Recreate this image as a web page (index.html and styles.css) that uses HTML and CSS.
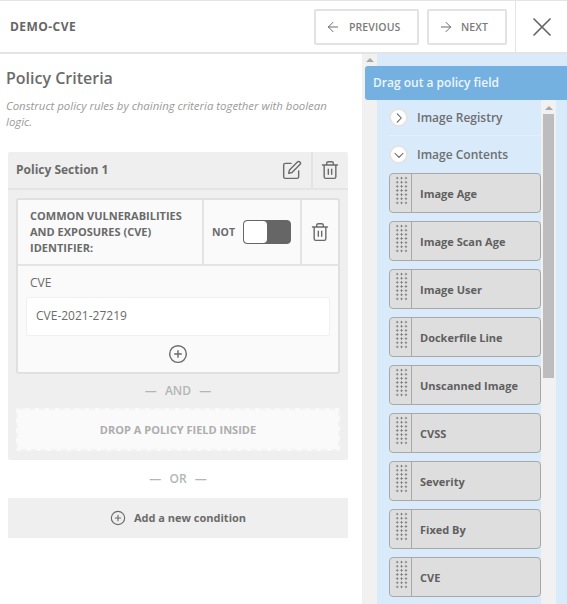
FILE: index.html
```html
<!DOCTYPE html>
<html lang="en">
<head>
<meta charset="utf-8">
<title>Policy Criteria</title>
<link rel="stylesheet" href="styles.css">
</head>
<body>
<svg class="defs" width="0" height="0" aria-hidden="true">
  <symbol id="trash" viewBox="0 0 24 24"><path d="M3 6h18M19 6v14a2 2 0 0 1-2 2H7a2 2 0 0 1-2-2V6M8 6V4a2 2 0 0 1 2-2h4a2 2 0 0 1 2 2v2M10 11v6M14 11v6"/></symbol>
  <symbol id="plus" viewBox="0 0 24 24"><circle cx="12" cy="12" r="10"/><path d="M12 8v8M8 12h8"/></symbol>
</svg>
<header class="topbar">
  <div class="title">DEMO-CVE</div>
  <button class="navbtn prev"><svg class="ico16" viewBox="0 0 24 24"><path d="M19 12H5M12 19l-7-7 7-7"/></svg><span>PREVIOUS</span></button>
  <button class="navbtn next"><svg class="ico16" viewBox="0 0 24 24"><path d="M5 12h14M12 5l7 7-7 7"/></svg><span>NEXT</span></button>
  <div class="closebox"><svg class="closeico" viewBox="0 0 24 24"><path d="M4 4l16 16M20 4L4 20"/></svg></div>
</header>
<main class="main">
  <section class="left">
    <h1 class="heading">Policy Criteria</h1>
    <p class="lead">Construct policy rules by chaining criteria together with boolean logic.</p>
    <div class="section">
      <div class="section-head">
        <div class="section-name">Policy Section 1</div>
        <div class="section-act edit"><svg class="ico20" viewBox="0 0 24 24"><path d="M11 4H4a2 2 0 0 0-2 2v14a2 2 0 0 0 2 2h14a2 2 0 0 0 2-2v-7"/><path d="M18.5 2.5a2.12 2.12 0 0 1 3 3L12 15l-4 1 1-4 9.5-9.5z"/></svg></div>
        <div class="section-act"><svg class="ico20"><use href="#trash"/></svg></div>
      </div>
      <div class="section-body">
        <div class="field">
          <div class="field-head">
            <div class="field-name">COMMON VULNERABILITIES AND EXPOSURES (CVE) IDENTIFIER:</div>
            <div class="field-not"><span>NOT</span><div class="toggle"><div class="knob"></div></div></div>
            <div class="field-del"><svg class="ico20"><use href="#trash"/></svg></div>
          </div>
          <div class="field-body">
            <div class="field-label">CVE</div>
            <div class="input">CVE-2021-27219</div>
            <div class="add"><svg class="ico20"><use href="#plus"/></svg></div>
          </div>
        </div>
        <div class="joiner and">— AND —</div>
        <div class="drop">DROP A POLICY FIELD INSIDE</div>
      </div>
    </div>
    <div class="joiner or">— OR —</div>
    <div class="newcond"><svg class="ico16"><use href="#plus"/></svg><span>Add a new condition</span></div>
  </section>
  <aside class="side">
    <div class="rail"><div class="arrow"></div></div>
    <div class="pane">
      <div class="drag-head">Drag out a policy field</div>
      <div class="lists">
        <div class="list">
          <div class="group first"><span class="chev"><svg viewBox="0 0 24 24"><path d="M9 5l7 7-7 7"/></svg></span><span>Image Registry</span></div>
          <div class="group"><span class="chev"><svg viewBox="0 0 24 24"><path d="M5 9l7 7 7-7"/></svg></span><span>Image Contents</span></div>
          <div class="item"><div class="grip"></div><div class="item-name">Image Age</div></div>
          <div class="item"><div class="grip"></div><div class="item-name">Image Scan Age</div></div>
          <div class="item"><div class="grip"></div><div class="item-name">Image User</div></div>
          <div class="item"><div class="grip"></div><div class="item-name">Dockerfile Line</div></div>
          <div class="item"><div class="grip"></div><div class="item-name">Unscanned Image</div></div>
          <div class="item"><div class="grip"></div><div class="item-name">CVSS</div></div>
          <div class="item"><div class="grip"></div><div class="item-name">Severity</div></div>
          <div class="item"><div class="grip"></div><div class="item-name">Fixed By</div></div>
          <div class="item"><div class="grip"></div><div class="item-name">CVE</div></div>
        </div>
        <div class="scroll"><div class="arrow"></div><div class="thumb"></div></div>
      </div>
    </div>
  </aside>
</main>
</body>
</html>
```
FILE: styles.css
```css
* { box-sizing: border-box; }
html, body { margin: 0; height: 100%; }
body {
  width: 567px;
  height: 604px;
  overflow: hidden;
  background: #fff;
  color: #6b6b6b;
  font-family: "Open Sans", sans-serif;
  display: flex;
  flex-direction: column;
}
.defs { position: absolute; }
svg { fill: none; stroke: currentColor; stroke-width: 1.7; stroke-linecap: round; stroke-linejoin: round; flex: none; display: block; }
.ico16 { width: 16px; height: 16px; }
.ico20 { width: 20px; height: 20px; }

.topbar {
  height: 54px;
  flex: none;
  display: flex;
  align-items: center;
  border-top: 1px solid #e4e4e4;
  border-bottom: 2px solid #e4e4e4;
}
.title { font-size: 12px; font-weight: 700; letter-spacing: .45px; margin-left: 10px; flex: 1; color: #666; }
.navbtn {
  height: 36px;
  display: flex;
  align-items: center;
  background: #fff;
  border: 2px solid #e2e2e2;
  border-radius: 2px;
  font: 600 10.5px "Open Sans", sans-serif;
  letter-spacing: .1px;
  color: #7b7b7b;
  padding: 0 0 0 9px;
  gap: 8px;
}
.navbtn svg { color: #6b6b6b; stroke-width: 1.5; }
.prev { width: 105px; margin-right: 8px; }
.next { width: 80px; gap: 7px; }
.closebox { width: 52px; height: 52px; margin-left: 8px; border-left: 1px solid #e4e4e4; display: flex; align-items: center; justify-content: center; color: #666; }
.closeico { width: 24px; height: 24px; stroke-width: 1.7; }

.main { flex: 1; display: flex; min-height: 0; }
.left { width: 362px; flex: none; padding: 0 14px 0 8px; }
.heading { font-size: 16px; font-weight: 600; margin: 12px 0 0 -2px; line-height: 24px; color: #6b6b6b; }
.lead { font-size: 11.4px; font-style: italic; line-height: 16px; margin: 8px 0 0 -2px; color: #9a9a9a; }

.section { margin-top: 22px; background: #efefef; border-radius: 2px; }
.section-head { height: 38px; display: flex; border-bottom: 2px solid #e4e4e4; align-items: stretch; }
.section-name { flex: 1; font-size: 12px; font-weight: 700; line-height: 36px; padding-left: 8px; }
.section-act { width: 37px; display: flex; align-items: center; justify-content: center; border-left: 2px solid #e4e4e4; padding: 0 2px 0 0; }
.section-act.edit { border-left: 0; width: 37px; }
.section-body { padding: 8px 8px 9px; }

.field { background: #fafafa; border: 2px solid #e0e0e0; border-radius: 3px; }
.field-head { display: flex; height: 66px; border-bottom: 2px solid #e4e4e4; }
.field-name { width: 184px; padding: 8px 12px; font-size: 11px; font-weight: 700; line-height: 16px; color: #6a6a6a; }
.field-not { width: 98px; display: flex; align-items: center; gap: 8px; padding-left: 8px; border-left: 2px solid #e4e4e4; font-size: 10.5px; font-weight: 700; }
.toggle { width: 48px; height: 24px; border: 1px solid #666; border-radius: 4px; background: #666; overflow: hidden; }
.knob { width: 23px; height: 100%; background: #fff; border-radius: 3px 4px 4px 3px; }
.field-del { flex: 1; display: flex; align-items: center; justify-content: center; border-left: 2px solid #e4e4e4; }
.field-body { padding: 9px 8px 0; height: 106px; }
.field-label { font-size: 12px; line-height: 16px; color: #6b6b6b; padding-left: 4px; }
.input { margin-top: 6px; height: 39px; background: #fff; border: 1px solid #f0f0f0; border-radius: 2px; padding-left: 9px; font-size: 12px; line-height: 36px; color: #6b6b6b; }
.add { display: flex; justify-content: center; margin-top: 8px; }

.joiner { text-align: center; font-size: 12px; font-weight: 600; color: #b5b5b5; word-spacing: 5px; }
.and { height: 34px; line-height: 33px; }
.drop { height: 43px; background: #fafafa; border: 2px dashed #f3f3f3; border-radius: 3px; text-align: center; font-size: 11px; font-weight: 700; line-height: 39px; color: #adadad; }
.or { height: 38px; line-height: 38px; }
.newcond { height: 40px; background: #efefef; display: flex; align-items: center; justify-content: center; gap: 8px; font-size: 11px; font-weight: 700; padding-bottom: 1px; }

.side { width: 205px; flex: none; display: flex; background: #d9eafb; }
.rail { width: 15px; flex: none; background: #f1f1f1; padding-top: 4px; }
.arrow { width: 0; height: 0; margin: 0 auto; border: 4px solid transparent; border-top: 0; border-bottom: 4px solid #a8a8a8; }
.pane { flex: 1; min-width: 0; padding-top: 12px; }
.drag-head { height: 34px; margin-left: -12px; background: #74b0e0; color: #eef6fd; font-size: 12px; font-weight: 600; line-height: 34px; padding-left: 8px; border-radius: 3px 0 0 3px; position: relative; }
.lists { display: flex; align-items: flex-start; padding-left: 12px; }
.list { width: 152px; flex: none; }
.group { height: 37px; display: flex; align-items: center; gap: 9px; font-size: 12px; font-weight: 600; color: #6f6f6f; }
.group.first { height: 36px; border-bottom: 1px solid #e6eff8; }
.chev { width: 19px; height: 19px; border-radius: 50%; background: #fff; border: 2px solid #e4e4e4; display: flex; align-items: center; justify-content: center; flex: none; }
.chev svg { width: 14px; height: 14px; stroke-width: 1.8; color: #5f5f5f; }
.item { height: 40px; margin-bottom: 8px; display: flex; background: #dedede; border: 1px solid #a8a8a8; border-radius: 4px; }
.grip {
  width: 22px;
  flex: none;
  border-right: 1px solid #a8a8a8;
  background-image: radial-gradient(circle, #6f6f6f 0.8px, transparent 1.1px);
  background-size: 4.4px 4.15px;
  background-origin: content-box;
  background-clip: content-box;
  padding: 2.4px 3.3px 6.6px 4.5px;
}
.item-name { font-size: 11px; font-weight: 700; line-height: 39px; padding-left: 8px; color: #606060; }
.scroll { width: 15px; height: 520px; background: #f1f1f1; padding-top: 6px; }
.scroll .arrow { margin-bottom: 4px; }
.thumb { width: 11px; height: 264px; margin: 0 auto; background: #bdbdbd; }
```
